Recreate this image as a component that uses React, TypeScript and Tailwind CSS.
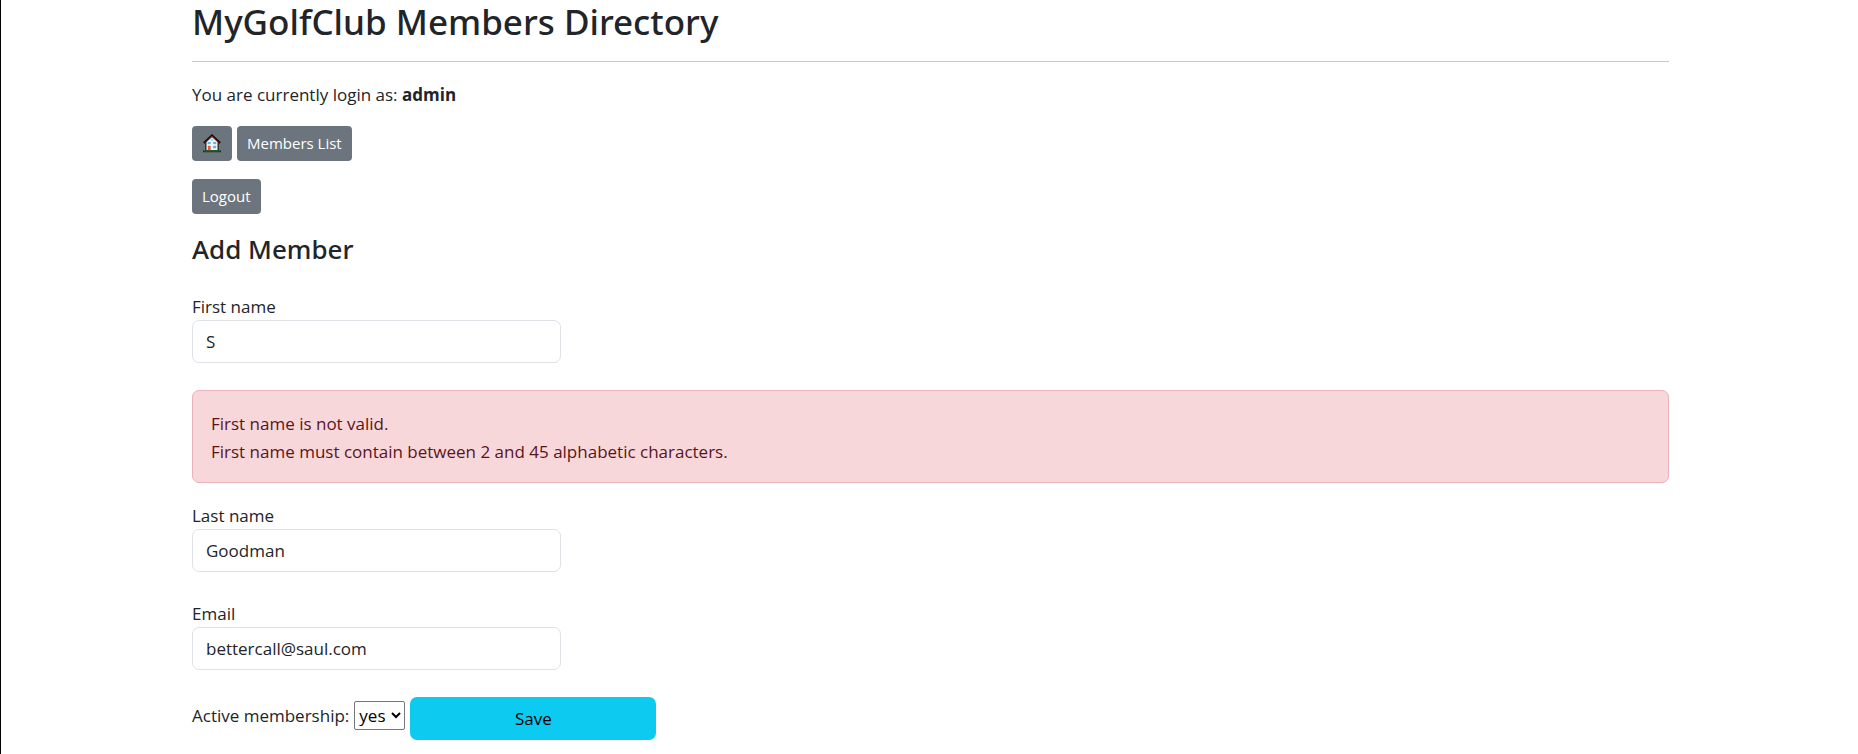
import type { ReactNode } from "react";

function HouseIcon() {
  return (
    <svg viewBox="1 0 18 18" className="h-5 w-5" aria-hidden="true">
      <path d="M4.500 8 10 3l5.500 5v8h-11z" fill="#f7f7f7" stroke="#111" strokeWidth="1" />
      <path d="M2.600 9 10 1.900 17.400 9" fill="none" stroke="#1a0808" strokeWidth="1.600" />
      <path d="M3.500 8.900 10 2.700l6.500 6.200" fill="none" stroke="#8d2a26" strokeWidth="0.700" />
      <rect x="8.800" y="5" width="2.400" height="2" fill="#9bd5f0" />
      <rect x="6" y="8" width="2.800" height="2" fill="#58b7e6" />
      <rect x="11" y="8" width="2.800" height="2" fill="#58b7e6" />
      <rect x="11" y="11.500" width="2.800" height="2.200" fill="#58b7e6" />
      <rect x="6.200" y="11.500" width="2.600" height="4.500" fill="#e05a45" />
      <path d="M2 16.500h16" stroke="#0d2d12" strokeWidth="1.600" />
      <path d="M3 16.200h14" stroke="#1d8a35" strokeWidth="0.800" />
    </svg>
  );
}

function NavButton({ children, label }: { children: ReactNode; label?: string }) {
  return (
    <button
      type="button"
      aria-label={label}
      className="flex h-[35px] items-center rounded bg-[#6c757d] px-[10px] pb-px text-[15px] leading-6 text-white"
    >
      {children}
    </button>
  );
}

function Field({ id, label, type = "text", value }: { id: string; label: string; type?: string; value: string }) {
  return (
    <div className="flex flex-col">
      <label htmlFor={id} className="leading-[26px]">
        {label}
      </label>
      <input
        id={id}
        type={type}
        defaultValue={value}
        className="h-[43px] w-1/4 rounded-[7px] border border-[#dee2e6] bg-white px-[13px]"
      />
    </div>
  );
}

export default function App() {
  return (
    <div className="min-h-screen border-l border-black bg-white pl-[2px] font-['Open_Sans','Noto_Sans',sans-serif] text-[17px] leading-7 text-[#212529]">
      <main className="mx-auto max-w-[1477px] pb-3">
        <h1 className="font-['Noto_Sans','Open_Sans',sans-serif] text-[35px] leading-[44px] font-medium">
          MyGolfClub Members Directory
        </h1>
        <hr className="mt-[17px] border-t border-[#c7c8c9]" />
        <p className="mt-[19px]">
          You are currently login as: <strong className="font-bold">admin</strong>
        </p>
        <nav className="mt-[17px] flex gap-[5px]">
          <NavButton label="Home">
            <HouseIcon />
          </NavButton>
          <NavButton>Members List</NavButton>
        </nav>
        <div className="mt-[18px] flex">
          <NavButton>Logout</NavButton>
        </div>
        <h2 className="mt-[17px] font-['Noto_Sans','Open_Sans',sans-serif] text-[26px] leading-9 font-medium">
          Add Member
        </h2>
        <form className="mt-[27px]" onSubmit={(event) => event.preventDefault()}>
          <Field id="first-name" label="First name" value="S" />
          <div
            role="alert"
            className="mt-[27px] mb-5 rounded-[7px] border border-[#e9b3b9] bg-[#f8d7da] px-[18px] pt-[19px] pb-4 text-[#58151c]"
          >
            <p>First name is not valid.</p>
            <p>First name must contain between 2 and 45 alphabetic characters.</p>
          </div>
          <Field id="last-name" label="Last name" value="Goodman" />
          <div className="mt-[29px]">
            <Field id="email" label="Email" type="email" value="bettercall@saul.com" />
          </div>
          <div className="mt-[27px] flex items-start gap-[5px]">
            <label htmlFor="active" className="pt-[5px]">
              Active membership:
            </label>
            <select
              id="active"
              defaultValue="yes"
              className="mt-1 h-[29px] w-[51px] rounded-[2px] border border-[#767676] bg-white text-black"
            >
              <option>yes</option>
              <option>no</option>
            </select>
            <button type="submit" className="h-[43px] w-1/6 rounded-[7px] bg-[#0dcaf0] text-black">
              Save
            </button>
          </div>
        </form>
      </main>
    </div>
  );
}
